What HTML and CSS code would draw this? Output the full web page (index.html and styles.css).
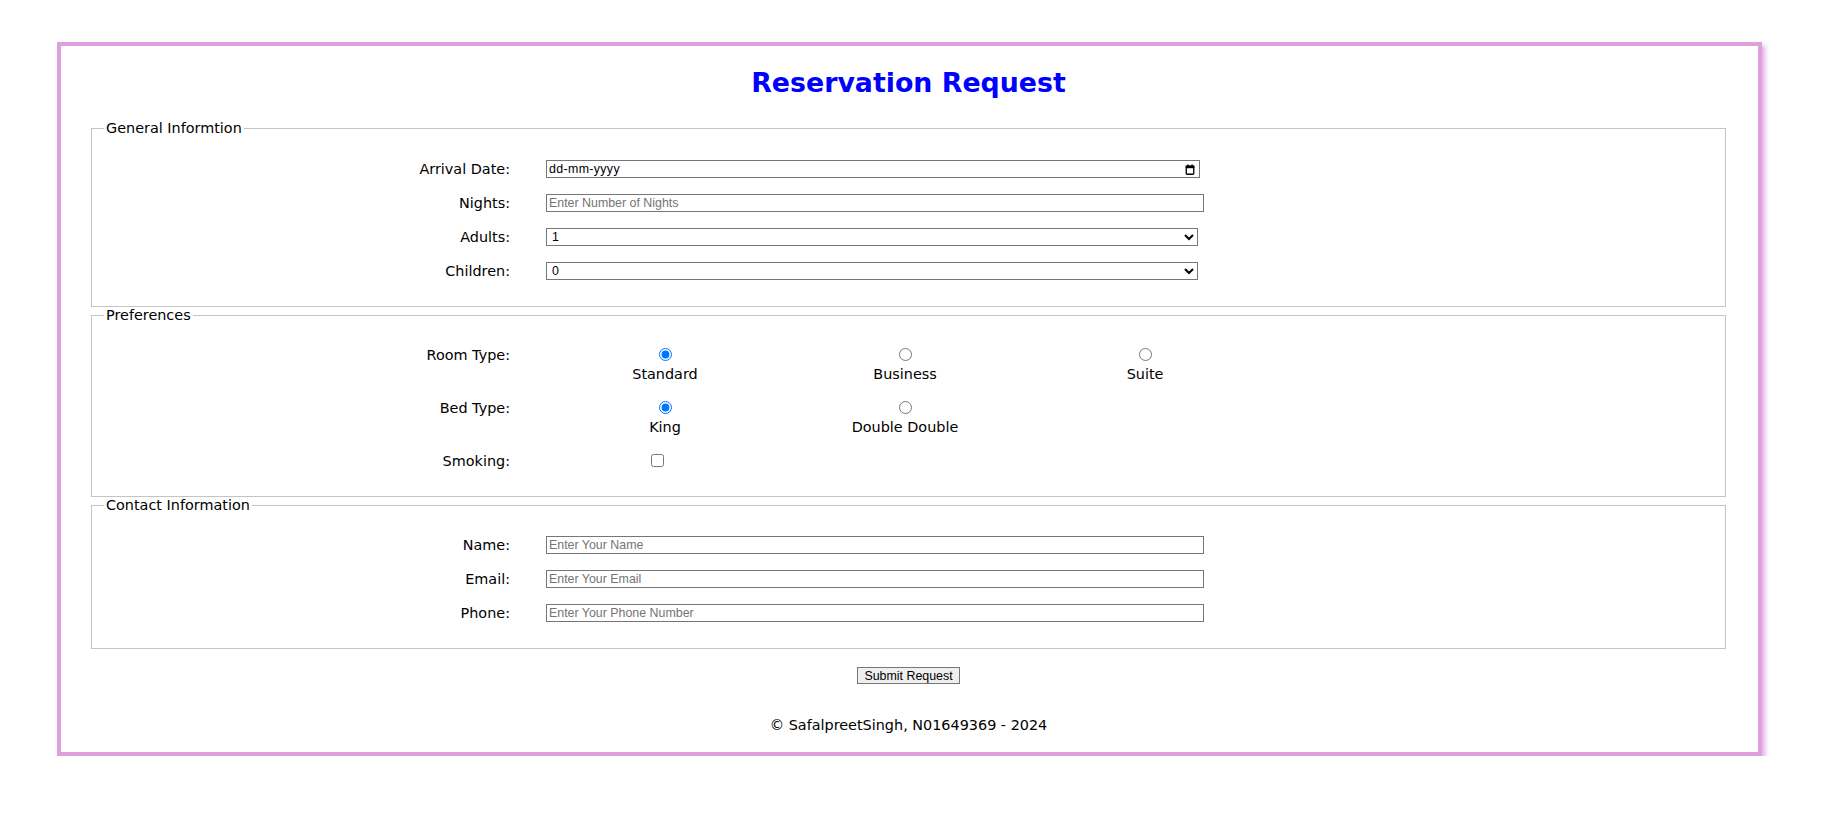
FILE: index.html
```html
<!DOCTYPE html>
<html lang="en">
<head>
<meta charset="utf-8">
<title>Reservation Request</title>
<link rel="stylesheet" href="styles.css">
</head>
<body>
<form class="card">
  <h1 class="title">Reservation Request</h1>

  <fieldset class="group group-general">
    <legend class="group-title">General Informtion</legend>
    <div class="rows">
      <div class="row">
        <label class="row-label">Arrival Date:</label>
        <div class="date-field">
          <span class="date-text">dd-mm-yyyy</span>
          <svg class="cal-icon" width="10" height="11" viewBox="0 0 10 11" aria-hidden="true">
            <rect x="1.25" y="2.25" width="7.5" height="8" rx="0.8" fill="none" stroke="#000" stroke-width="1.3"/>
            <rect x="0.6" y="1.6" width="8.8" height="2.6" fill="#000"/>
            <rect x="2.3" y="0.4" width="1.2" height="2" fill="#000"/>
            <rect x="6.5" y="0.4" width="1.2" height="2" fill="#000"/>
          </svg>
        </div>
      </div>
      <div class="row">
        <label class="row-label" for="nights">Nights:</label>
        <input class="field" id="nights" type="text" placeholder="Enter Number of Nights">
      </div>
      <div class="row">
        <label class="row-label" for="adults">Adults:</label>
        <select class="choice" id="adults">
          <option>1</option><option>2</option><option>3</option><option>4</option>
        </select>
      </div>
      <div class="row">
        <label class="row-label" for="children">Children:</label>
        <select class="choice" id="children">
          <option>0</option><option>1</option><option>2</option><option>3</option>
        </select>
      </div>
    </div>
  </fieldset>

  <fieldset class="group group-pref">
    <legend class="group-title">Preferences</legend>
    <div class="pref-rows">
      <div class="row">
        <span class="row-label">Room Type:</span>
        <div class="options">
          <label class="option"><input class="radio" type="radio" name="room" checked><span class="option-text">Standard</span></label>
          <label class="option"><input class="radio" type="radio" name="room"><span class="option-text">Business</span></label>
          <label class="option"><input class="radio" type="radio" name="room"><span class="option-text">Suite</span></label>
        </div>
      </div>
      <div class="row row-bed">
        <span class="row-label">Bed Type:</span>
        <div class="options">
          <label class="option"><input class="radio" type="radio" name="bed" checked><span class="option-text">King</span></label>
          <label class="option"><input class="radio" type="radio" name="bed"><span class="option-text">Double Double</span></label>
        </div>
      </div>
      <div class="row row-smoke">
        <label class="row-label" for="smoking">Smoking:</label>
        <div class="check-wrap"><input class="check" id="smoking" type="checkbox"></div>
      </div>
    </div>
  </fieldset>

  <fieldset class="group group-contact">
    <legend class="group-title">Contact Information</legend>
    <div class="rows">
      <div class="row">
        <label class="row-label" for="name">Name:</label>
        <input class="field" id="name" type="text" placeholder="Enter Your Name">
      </div>
      <div class="row">
        <label class="row-label" for="email">Email:</label>
        <input class="field" id="email" type="text" placeholder="Enter Your Email">
      </div>
      <div class="row">
        <label class="row-label" for="phone">Phone:</label>
        <input class="field" id="phone" type="text" placeholder="Enter Your Phone Number">
      </div>
    </div>
  </fieldset>

  <div class="actions">
    <button class="submit" type="button">Submit Request</button>
  </div>

  <footer class="footer">© SafalpreetSingh, N01649369 - 2024</footer>
</form>
</body>
</html>
```

FILE: styles.css
```css
html, body {
  margin: 0;
  padding: 0;
  background: #ffffff;
}

body {
  font-family: "DejaVu Sans", "Liberation Sans", sans-serif;
  font-size: 14.4px;
  color: #000;
}

.card {
  box-sizing: border-box;
  width: 1705px;
  margin: 42px 0 0 57px;
  padding: 0 32px 18px 30px;
  border: 4px solid #dda0dd;
  box-shadow: 3px 3px 5px rgba(221, 160, 221, 0.85);
  background: #fff;
}

.title {
  margin: 21px 0 21px;
  font-family: "DejaVu Sans", sans-serif;
  font-weight: bold;
  font-size: 26.8px;
  line-height: 32px;
  color: #0000ff;
  text-align: center;
}

.group {
  margin: 0;
  padding: 23px 12px 25px;
  border: 1px solid #c4c4c4;
  min-width: 0;
}

.group-general {
  padding-bottom: 26px;
}

.group-pref {
  padding: 22px 12px 26px;
}

.group-contact {
  padding: 22px 12px 26px;
}

.group-title {
  padding: 0 2px;
  font-size: 14.4px;
  line-height: 17px;
}

.rows {
  display: flex;
  flex-direction: column;
  gap: 16px;
}

.pref-rows {
  display: flex;
  flex-direction: column;
}

.row-bed {
  margin-top: 16px;
}

.row-smoke {
  margin-top: 16px;
}

.row {
  display: grid;
  grid-template-columns: 406px auto;
  column-gap: 36px;
  align-items: start;
}

.row-label {
  text-align: right;
  line-height: 18px;
  white-space: nowrap;
}

.field,
.choice,
.date-field {
  box-sizing: border-box;
  height: 18px;
  margin: 0;
  border: 1px solid #767676;
  border-radius: 0;
  background: #fff;
  font-family: "Liberation Sans", Arial, sans-serif;
  font-size: 12.4px;
  color: #000;
}

.field {
  width: 658px;
  padding: 1px 2px;
}

.field::placeholder {
  color: #757575;
}

.choice {
  width: 652px;
  padding: 0 0 0 1px;
}

.date-field {
  width: 654px;
  display: flex;
  align-items: center;
  justify-content: space-between;
  padding: 0 4px 0 2px;
}

.date-text {
  letter-spacing: 0.35px;
  line-height: 14px;
}

.cal-icon {
  display: block;
}

.options {
  display: flex;
  margin-left: -1px;
}

.option {
  width: 240px;
  display: flex;
  flex-direction: column;
  align-items: center;
}

.radio {
  width: 13px;
  height: 13px;
  margin: 2px 0 0;
}

.option-text {
  margin-top: 5px;
  line-height: 17px;
}

.check-wrap {
  width: 222px;
  display: flex;
  justify-content: center;
}

.check {
  width: 13px;
  height: 13px;
  margin: 2px 0 0;
}

.actions {
  display: flex;
  justify-content: center;
  margin-top: 18px;
}

.submit {
  box-sizing: border-box;
  height: 17px;
  padding: 0 6px;
  border: 1px solid #767676;
  border-radius: 0;
  background: #efefef;
  font-family: "Liberation Sans", Arial, sans-serif;
  font-size: 12.4px;
  line-height: 14px;
  color: #000;
}

.footer {
  margin-top: 33px;
  text-align: center;
  line-height: 17px;
}
```
